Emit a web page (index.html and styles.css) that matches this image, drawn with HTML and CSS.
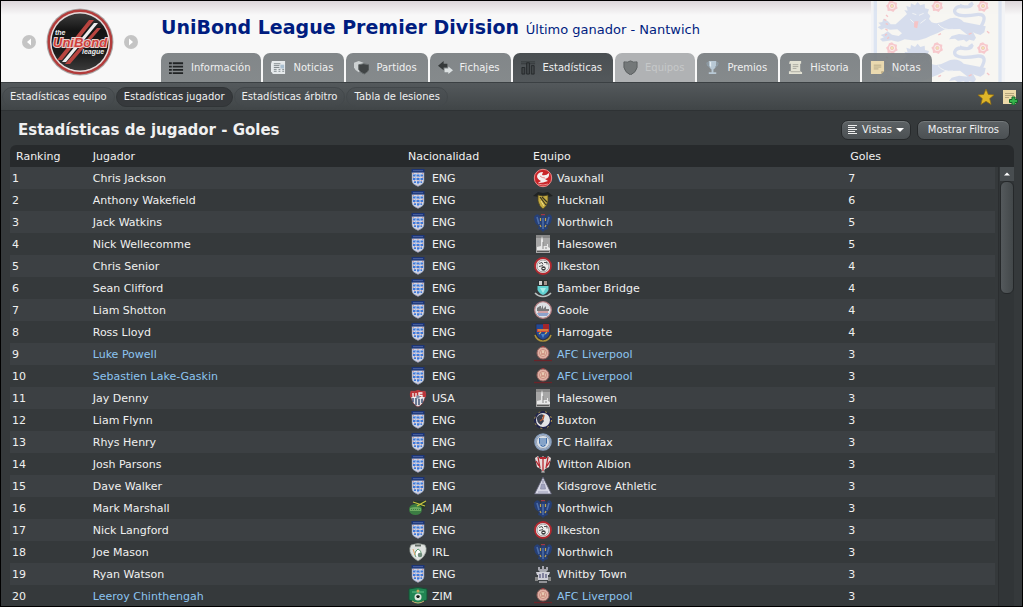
FILE: index.html
```
<!DOCTYPE html>
<html lang="es">
<head>
    <meta charset="UTF-8">
    <meta name="viewport" content="width=device-width, initial-scale=1.0">
    <title>UniBond League Premier Division</title>
    <link rel="stylesheet" href="styles.css">
</head>
<body>
    <svg class="symbols" aria-hidden="true">
        <!-- nations -->
        <symbol id="eng" viewBox="0 0 20 20">
            <path d="M4 4h12v9q0 3-6 5.500q-6-2.500-6-5.500z" fill="#cdd6ea" stroke="#7b88a3" stroke-width=".6"/>
            <path d="M3.500 1h13v3.500h-13z" fill="#1c3475"/>
            <path d="M5 2.700h10" stroke="#5a74b0" stroke-width=".8"/>
            <path d="M5 7.500h2.500m1 0h3m1 0H15M5 11h2.500m1 0h3m1 0H15M6 14.200h2m1 0h2.500m1 0H14" stroke="#3f78d6" stroke-width="1.800"/>
            <path d="M7 6.500h1M11 8.500h1M7 10h1M11 12h1M9 15.500h2" stroke="#7fa6e6"/>
            <path d="M5 5.500h1m3.500 0h1m3.500 0h1M5 9.300h1m3.500 0h1m3.500 0h1M6 12.700h1m2.500 0h1m2.500 0h1M9.500 17h1" stroke="#e09a92" stroke-width="1"/>
        </symbol>
        <symbol id="usa" viewBox="0 0 20 20">
            <path d="M3 3q3 1 7-1 4 2 7 1 2 3 0 7-2 7-7 9-5-2-7-9-2-4 0-7z" fill="#e3e0e4" stroke="#722e36" stroke-width=".8"/>
            <path d="M3 3q3 1 7-1 4 2 7 1 1.500 3 1 6H2q-.5-3 1-6z" fill="#bd3439"/>
            <path d="M5 10v4M8 10v7M11 10v7M14 10v5" stroke="#34496f" stroke-width="1.400"/>
            <path d="M5 5v3q0 2 3 1V5M14.500 5H11v2.500h3V10h-4" stroke="#f7f7f7" stroke-width="1.300" fill="none"/>
            <circle cx="10" cy="9" r="1.800" fill="#8390a9"/>
        </symbol>
        <symbol id="jam" viewBox="0 0 20 20">
            <path d="M6 3l12 0-1 7-4 2-8-5z" fill="#26382a"/>
            <ellipse cx="7.500" cy="11.500" rx="6.500" ry="5.500" fill="#3c7d43"/>
            <path d="M5 4l12 4M18 3L9 8" stroke="#c8c541" stroke-width="1.300"/>
            <path d="M2 10q6-2 11 0v3H2z" fill="#6dab62"/>
            <path d="M3 11.500h9" stroke="#3c7d43" stroke-dasharray="1 1"/>
        </symbol>
        <symbol id="irl" viewBox="0 0 20 20">
            <path d="M3 3q7-3 14 0 2 3 1 7-2 6-8 9-6-3-8-9-1-4 1-7z" fill="#dfe2df" stroke="#8b938c" stroke-width=".7"/>
            <path d="M7 2.500h6v2H7z" fill="#626d66"/>
            <path d="M8 15q-3-4 2-8 4 2 3 7" fill="#fff" stroke="#5c9970"/>
            <circle cx="12" cy="13" r="2.300" fill="#6f8b7a"/><path d="M5 7l2 6" stroke="#e3a46a"/>
        </symbol>
        <symbol id="zim" viewBox="0 0 20 20">
            <path d="M1 3q9-3 18 0v11q-5 1-9 4-4-3-9-4z" fill="#218553" stroke="#174f34"/>
            <path d="M4 5h12v2H4z" fill="#41a36d"/>
            <circle cx="10" cy="5" r="1.500" fill="#c7a45b"/>
            <circle cx="10" cy="11" r="3.500" fill="#dce8dd"/><path d="M10 9l2 1-1 2H9l-1-2z" fill="#162019"/>
            <path d="M4 15q6 4 12 0" stroke="#c9b274" fill="none"/>
        </symbol>

        <!-- clubs -->
        <symbol id="vauxhall" viewBox="0 0 20 20">
            <circle cx="10" cy="10" r="8.700" fill="#c92529" stroke="#e98b8b" stroke-width="1"/>
            <path d="M4 8q1-4 6-4l-1 3q4 1 7-2 1 5-4 6l3 2q-5 2-9 2H5l3-2q-4-2-4-5z" fill="#f5eeee"/>
            <path d="M7 8q2 2 5 2M5 16q5 2 10 0" stroke="#e98b8b" fill="none"/>
        </symbol>
        <symbol id="hucknall" viewBox="0 0 20 20">
            <path d="M0 6l5-4 5 1 5-1 5 4-5 1H6z" fill="#202323"/>
            <path d="M5 5q5 2 10 0v6q-1 5-5 8-4-3-5-8z" fill="#c4ab42" stroke="#4b431f" stroke-width=".8"/>
            <path d="M7 7l6 8M9 7l5 5" stroke="#373423" stroke-width="1.200"/><path d="M8 11l3 5" stroke="#eedd83"/>
        </symbol>
        <symbol id="northwich" viewBox="0 0 20 20">
            <path d="M1 5q3-5 6-1l1 2 1-4h3l1 4 1-2q3-4 5 1 0 7-5 9l1 3-3 1-2 2-2-2-3-1 1-3q-5-2-5-9z" fill="#263f76"/>
            <path d="M4 5l2 7M16 5l-2 7M10 6v11" stroke="#4b6da9" stroke-width="1.600"/>
            <path d="M8 2h4v1.200H8z" fill="#9f3840"/>
            <path d="M7.500 6v3M12.500 6v3M7 13l1 2M13 13l-1 2" stroke="#c5a64c" stroke-width="1.200"/>
        </symbol>
        <symbol id="halesowen" viewBox="0 0 20 20">
            <path d="M3 1h14v18H3z" fill="#a6a6a6"/><path d="M3 1h14v3H3z" fill="#878787"/>
            <path d="M4 15v-2l4-1V6l1-4 1 4v6h4v-2h1v3l2 1v2H4z" fill="#e8e8e8"/>
            <path d="M10 8v7M13 13v2" stroke="#888"/><path d="M4 17h12v1H4z" fill="#585858"/>
        </symbol>
        <symbol id="ilkeston" viewBox="0 0 20 20">
            <circle cx="10" cy="10" r="8" fill="#f1eeee" stroke="#b3272e" stroke-width="1.800"/>
            <circle cx="10" cy="10" r="6" fill="#eee" stroke="#777" stroke-width=".7"/>
            <path d="M6 7.500l3-1 1 2M11 6.500h3v2M6 10.500l4-1" stroke="#555" fill="none"/>
            <circle cx="10.500" cy="12.500" r="2.200" fill="#3e3e3e"/><path d="M9.500 12h2v1h-2z" fill="#fff"/>
        </symbol>
        <symbol id="bamber" viewBox="0 0 20 20">
            <path d="M5 2h10v6H5z" fill="#2c3030"/><path d="M6 3h3v4H6z" fill="#cfcfcf"/><path d="M11 3h3v4h-3z" fill="#a5938c"/>
            <path d="M4.500 8h11v4q-2 4-5.500 5-3.500-1-5.500-5z" fill="#61d0d0"/><path d="M7 10h6l-3 5z" fill="#a5ebe5"/>
            <path d="M2 15q4 4 8 3.500 4 .5 8-3.500" stroke="#bbc0bf" stroke-width="1.500" fill="none"/>
        </symbol>
        <symbol id="goole" viewBox="0 0 20 20">
            <circle cx="10" cy="10" r="8.300" fill="#dce0e4" stroke="#b77f83" stroke-width="1.200"/>
            <path d="M4 11V8l3-2h1v3l2-4v4l3-3v3h3v2z" fill="#77787a"/>
            <path d="M4 13h12l-2 3H6z" fill="#8ba2cc"/><path d="M5 12h10" stroke="#c46468"/>
        </symbol>
        <symbol id="harrogate" viewBox="0 0 20 20">
            <path d="M2 13q2 6 8 6t8-6" fill="none" stroke="#ad9138" stroke-width="1.600"/>
            <path d="M3 2h14v9q-1 5-7 7-6-2-7-7z" fill="#244894" stroke="#282a38" stroke-width=".7"/>
            <path d="M10 2h6v6h-6z" fill="#a4262b"/><path d="M4 7h12v3H4z" fill="#cf4737"/>
            <path d="M5 8h10M6 12l2-2M12 12l2-2" stroke="#dcb448" stroke-width="1.200"/><path d="M8 12h4l-2 4z" fill="#4c84c5"/>
        </symbol>
        <symbol id="liverpool" viewBox="0 0 20 20">
            <circle cx="10" cy="9" r="6" fill="#dfb0a4" stroke="#9a6560"/>
            <circle cx="10" cy="9" r="3.500" fill="#e8c9b1" stroke="#c27f74" stroke-width=".8"/>
            <path d="M8 8h1m2 0h1M8 10h4" stroke="#bb6c62"/><path d="M1 16.500h18" stroke="#6b2328" stroke-width="1.300"/>
            <path d="M8 3l2-1 2 1z" fill="#ad3037"/>
        </symbol>
        <symbol id="buxton" viewBox="0 0 20 20">
            <circle cx="10" cy="10" r="8" fill="#e3e3e5" stroke="#20234a" stroke-width="2"/>
            <circle cx="10" cy="10" r="8.500" fill="none" stroke="#b59a49" stroke-dasharray="2 5"/>
            <path d="M4 7q3-4 7-2L9 8l2 3-3 4q-5-3-4-8z" fill="#3a3f4f"/>
            <path d="M11 5l-1 4-3 2" stroke="#b35b38" stroke-width="1.500" fill="none"/>
        </symbol>
        <symbol id="halifax" viewBox="0 0 20 20">
            <circle cx="10" cy="10" r="8" fill="#dbe1e8" stroke="#899fbe" stroke-width="1.600"/>
            <circle cx="10" cy="10" r="6.500" fill="none" stroke="#7b89a0" stroke-width=".8"/>
            <path d="M6 6h8v5q-1 3-4 4-3-1-4-4z" fill="#3f6eaa"/><path d="M8 6v7M10 6v8M12 6v7" stroke="#f2f5f8" stroke-width=".8"/>
        </symbol>
        <symbol id="witton" viewBox="0 0 20 20">
            <path d="M2 4l3-2 2 3 3-3 3 3 2-3 3 2-2 9-4 2-2 4-2-4-4-2z" fill="#e7dada"/>
            <path d="M5 3l2 11M10 4v13M15 3l-2 11M3 7l3 5M17 7l-3 5" stroke="#b52831" stroke-width="1.300"/>
            <path d="M7 3h6v2H7z" fill="#b52831"/><path d="M8 18h4" stroke="#aaa"/>
        </symbol>
        <symbol id="kidsgrove" viewBox="0 0 20 20">
            <path d="M10 1l8.500 17h-17z" fill="#d8d8e6" stroke="#54556b" stroke-width=".8"/>
            <path d="M8.500 8h3l1 5h-5zM5 16h10" fill="#a0a2bf" stroke="#8e90ab" stroke-width=".8"/><path d="M10 4v3" stroke="#8183a0"/>
        </symbol>
        <symbol id="whitby" viewBox="0 0 20 20">
            <path d="M5 6V3h2v2h2V2h2v3h2V3h2v3l-2 2H7z" fill="#a7a8b0"/>
            <path d="M3 8h14l-1 3h-1v5H5v-5H4z" fill="#cfcfd8"/>
            <path d="M7 10v4M10 9v5M13 10v4" stroke="#5b5a80" stroke-width="1.300"/><path d="M2 13h3v4H2zm13 0h3v4h-3z" fill="#888"/>
            <path d="M6 18h8" stroke="#b0b0b4" stroke-width="1.500"/>
        </symbol>

        <!-- England badge in the header -->
        <symbol id="lion" viewBox="0 0 384 125">
            <path class="lion" d="M112 42l-8-12 10 2-4-14 12 4 2-12 12 6 8-10 8 10 13-4 1 13 12 3-4 11 8 9-4 9 8 10q19 8 42-6 32-17 54 5l66 13-4 18-12 8-16-5-6-4 9 17-6 9-14-3-9 7-7-7-18 3-9-6-18 2 8-10 22-6 26 3-23-18-45 1q-20 12-44 20-30 16-55 13l-22-3-20 8-20-5-26 4-8-8 12-5-10-7 11-4 10-7 13 10 20 4 10-8-14-12-22 1-15-5-11 5-11-7 10-6-8-8 12-2 3-10 14 8 8 9 15 0z"/>
            <path class="tail" d="M334 80q22-38-8-37-28 5-46 4-27-2-25-16 4-13 22-12 26 5 29-6M280 22l-10-7M298 17l12-8"/>
            <path class="mane" d="M128 40l12 4M148 46l14-6M132 68l-10-10M152 70l16-12M205 72q16 20 45 16"/>
            <path class="claw" d="M136 66h8l-3 16-6-2zM55 50l-6-5M50 61l-7-3M55 73l-7-2M54 91l-7-4M52 102l-6 4M58 111l-5 5M214 101l-8 4M306 99l-9 4M352 94l7 6"/>
        </symbol>
        <symbol id="rose" viewBox="0 0 40 40">
            <path d="M20 3l6 5 9 2-1 9 3 8-8 4-5 7-8-4-9 1-1-9-4-7 6-5 3-8z" fill="#f7c5c9"/>
            <circle cx="20" cy="20" r="9" fill="#fbeeea"/><circle cx="20" cy="20" r="5" fill="#eee5a9" stroke="#f2b4ba" stroke-width="2"/>
        </symbol>
    </svg>

    <header class="header">
        <svg class="badge" viewBox="4 3 402 243" preserveAspectRatio="none" aria-hidden="true">
            <path d="M4 3h402v243H4z" fill="#f3f4f6"/>
            <path d="M12 3h384v243H12z" fill="#dbe4f2"/>
            <path d="M22 3h364v243H22z" fill="#f7f6f2"/>
            <use href="#lion" x="0" y="0" width="384" height="125"/>
            <use href="#lion" x="0" y="125" width="384" height="125"/>
            <use href="#rose" x="47" y="-2" width="40" height="40"/>
            <use href="#rose" x="183" y="-2" width="40" height="40"/>
            <use href="#rose" x="320" y="-2" width="40" height="40"/>
            <use href="#rose" x="47" y="124" width="40" height="40"/>
            <use href="#rose" x="183" y="124" width="40" height="40"/>
            <use href="#rose" x="320" y="124" width="40" height="40"/>
        </svg>
        <div class="league">
            <button class="arrow" aria-label="Anterior"><svg viewBox="0 0 14 14"><path d="M9 3.500v7L5 7z" fill="#fff"/></svg></button>
            <svg class="logo" viewBox="0 0 68 68" role="img" aria-label="the UniBond league">
                <defs>
                    <linearGradient id="disc" x2="0" y2="1"><stop stop-color="#3c3c3c"/><stop offset=".3" stop-color="#141414"/><stop offset=".7" stop-color="#1c1c1c"/><stop offset="1" stop-color="#3a3a3a"/></linearGradient>
                </defs>
                <circle cx="34" cy="34" r="33.500" fill="#aaa"/>
                <circle cx="34" cy="34" r="32.500" fill="#b23c3b"/>
                <circle cx="34" cy="34" r="30" fill="#e5dcdc"/>
                <circle cx="34" cy="34" r="28.500" fill="url(#disc)"/>
                <path d="M43 12h5L16 52h-5zM51 20h4L24 56h-5z" fill="#b9443f"/>
                <path d="M48 15h4L20 54h-4z" fill="#eee"/>
                <text class="logo-small" x="9" y="27">the</text>
                <text class="logo-name" x="7" y="39">UniBond</text>
                <text class="logo-small" x="36" y="46">league</text>
            </svg>
            <button class="arrow" aria-label="Siguiente"><svg viewBox="0 0 14 14"><path d="M5 3.500v7L9 7z" fill="#fff"/></svg></button>
        </div>
        <div class="heading">
            <h1>UniBond League Premier Division <small>Último ganador - Nantwich</small></h1>
            <nav class="tabs">
                <a href="#"><svg viewBox="0 0 16 16"><path d="M0 3.500h3m1 0h11M0 7h3m1 0h11M0 10.500h3m1 0h11M0 14h3m1 0h11" stroke="#202324" stroke-width="2"/></svg>Información</a>
                <a href="#"><svg viewBox="0 0 16 16"><path d="M1 1h14v14H2L0 12V4z" fill="#e6eaec"/><path d="M3 4h7M3 6h6M3 8h6M3 10h3m2 0h2m2 0h2M3 12h3m2 0h2m2 0h2" stroke="#7c8489"/><path d="M10 5h4v4h-4z" fill="#a9bfd0"/></svg>Noticias</a>
                <a href="#"><svg viewBox="0 0 16 16"><path d="M0 3l5-2 5 2v5q-1 3-5 5-4-2-5-5z" fill="#cdd1d2"/><path d="M5 5l5-1 6 1v5q-1 3-5 5-5-2-6-5z" fill="#404445" stroke="#686d6e"/></svg>Partidos</a>
                <a href="#"><svg viewBox="0 0 16 16"><path d="M0 6l6-5v3h4v4H6v3z" fill="#35393a"/><path d="M16 11l-5-4v2H7v4h4v2z" fill="#dce1e2"/></svg>Fichajes</a>
                <a href="#" class="active"><svg viewBox="0 0 16 16"><path d="M0 2h15M0 4h15" stroke="#34393b"/><path d="M1 8h3v7H1zm5-5h3v12H6zm5 3h3v9h-3z" fill="#414648" stroke="#25292b"/></svg>Estadísticas</a>
                <a aria-disabled="true"><svg viewBox="0 0 16 16"><path d="M1 2q4 1 7-1 3 2 7 1v6q-1 5-7 8-6-3-7-8z" fill="#747879" stroke="#595d5e"/></svg>Equipos</a>
                <a href="#"><svg viewBox="0 0 16 16"><path d="M4 1h8v5q-1 3-3 4v3h3v2H4v-2h3v-3Q5 9 4 6z" fill="#b8c8d4"/><path d="M4 3H2q0 4 3 4M12 3h2q0 4-3 4" fill="none" stroke="#91a3af"/><path d="M6 2v5" stroke="#eef5f8"/></svg>Premios</a>
                <a href="#"><svg viewBox="0 0 16 16"><path d="M2 1h12v3h-1v8l2 1v2H1v-3h2V4H1z" fill="#e3e2d4"/><path d="M5 5h6M5 7h6M5 9h4M3 12.500h10" stroke="#a9a99f"/></svg>Historia</a>
                <a href="#"><svg viewBox="0 0 16 16"><path d="M1 1h14v11l-3 3H1z" fill="#ead9af"/><path d="M15 12h-3v3z" fill="#b8a780"/><path d="M4 5.500h8M4 7.500h8M4 9.500h5" stroke="#b5a988"/></svg>Notas</a>
            </nav>
        </div>
    </header>

    <nav class="subnav">
        <a href="#">Estadísticas equipo</a>
        <a href="#" class="active">Estadísticas jugador</a>
        <a href="#">Estadísticas árbitro</a>
        <a href="#">Tabla de lesiones</a>
        <div class="tools">
            <button aria-label="Favorito"><svg viewBox="0 0 16 16"><path d="M8 0l2.300 5.400 5.700.5-4.300 3.700 1.400 5.900L8 12.300l-5.100 3.200 1.400-5.900L0 5.900l5.700-.5z" fill="#dfb629" stroke="#8f6d14" stroke-width=".7"/></svg></button>
            <button aria-label="Añadir nota"><svg viewBox="0 0 16 16"><path d="M1 1h13v14H1z" fill="#ecd9a8"/><path d="M3 4.500h9M3 6.500h9M3 8.500h4" stroke="#b5a57d"/><path d="M10 8h3v2.500h2.500v3H13V16h-3v-2.500H7.500v-3H10z" fill="#37b44c" stroke="#14622a"/></svg></button>
        </div>
    </nav>

    <main class="content">
        <div class="title-row">
            <h2>Estadísticas de jugador - Goles</h2>
            <button class="menu"><svg viewBox="0 0 10 10"><path d="M0 .5h9M0 2.500h7M0 4.500h9M0 6.500h7M0 8.500h9" stroke="#eee"/></svg>Vistas<svg class="caret" viewBox="0 0 8 6"><path d="M0 1h8L4 5z" fill="#fff"/></svg></button>
            <button>Mostrar Filtros</button>
        </div>
        <div class="list">
            <table>
                <thead>
                    <tr>
                        <th class="rank">Ranking</th>
                        <th class="player">Jugador</th>
                        <th class="nation">Nacionalidad</th>
                        <th class="club">Equipo</th>
                        <th class="goals">Goles</th>
                    </tr>
                </thead>
                <tbody id="rows"></tbody>
            </table>
            <div class="scrollbar">
                <button aria-label="Subir"><svg viewBox="0 0 8 6"><path d="M1 4.500h6L4 1.500z" fill="#fff"/></svg></button>
                <div class="thumb"></div>
            </div>
        </div>
    </main>

    <script>
        // name, nation, club, badge, goals
        const players = [
            ["Chris Jackson", "ENG", "Vauxhall", "vauxhall", 7],
            ["Anthony Wakefield", "ENG", "Hucknall", "hucknall", 6],
            ["Jack Watkins", "ENG", "Northwich", "northwich", 5],
            ["Nick Wellecomme", "ENG", "Halesowen", "halesowen", 5],
            ["Chris Senior", "ENG", "Ilkeston", "ilkeston", 4],
            ["Sean Clifford", "ENG", "Bamber Bridge", "bamber", 4],
            ["Liam Shotton", "ENG", "Goole", "goole", 4],
            ["Ross Lloyd", "ENG", "Harrogate", "harrogate", 4],
            ["Luke Powell", "ENG", "AFC Liverpool", "liverpool", 3],
            ["Sebastien Lake-Gaskin", "ENG", "AFC Liverpool", "liverpool", 3],
            ["Jay Denny", "USA", "Halesowen", "halesowen", 3],
            ["Liam Flynn", "ENG", "Buxton", "buxton", 3],
            ["Rhys Henry", "ENG", "FC Halifax", "halifax", 3],
            ["Josh Parsons", "ENG", "Witton Albion", "witton", 3],
            ["Dave Walker", "ENG", "Kidsgrove Athletic", "kidsgrove", 3],
            ["Mark Marshall", "JAM", "Northwich", "northwich", 3],
            ["Nick Langford", "ENG", "Ilkeston", "ilkeston", 3],
            ["Joe Mason", "IRL", "Northwich", "northwich", 3],
            ["Ryan Watson", "ENG", "Whitby Town", "whitby", 3],
            ["Leeroy Chinthengah", "ZIM", "AFC Liverpool", "liverpool", 3]
        ];
        const myClub = "AFC Liverpool";
        let rowsHTML = "";
        players.forEach(([name, nation, club, badge, goals], i) => {
            rowsHTML += `<tr class="${club === myClub ? "mine" : ""}">
                <td>${i + 1}</td>
                <td><a href="#">${name}</a></td>
                <td><svg class="crest"><use href="#${nation.toLowerCase()}"/></svg>${nation}</td>
                <td><svg class="crest"><use href="#${badge}"/></svg><a href="#">${club}</a></td>
                <td>${goals}</td>
            </tr>`;
        });
        document.getElementById("rows").innerHTML = rowsHTML;
    </script>
</body>
</html>
```

FILE: styles.css
```
* {
    box-sizing: border-box;
}
body {
    margin: 0;
    height: 100vh;
    display: flex;
    flex-direction: column;
    overflow: hidden;
    border: 1px solid #000;
    background: #35393b;
    color: #f0f0f0;
    font-family: "DejaVu Sans", sans-serif;
    font-size: 11px;
}
a {
    color: inherit;
    text-decoration: none;
}
button {
    padding: 0;
    border: none;
    background: none;
    color: inherit;
    font: inherit;
    cursor: pointer;
}
svg {
    display: block;
    flex: none;
}
.symbols {
    position: absolute;
    width: 0;
    height: 0;
}

/* header */
.header {
    position: relative;
    display: flex;
    flex: none;
    height: 81px;
    background: linear-gradient(#dcd6da, #f8f8f8 14px);
}
.badge {
    position: absolute;
    top: 0;
    right: 17px;
    width: 134px;
    height: 81px;
    opacity: 0.9;
}
.lion {
    fill: #d3dbec;
}
.tail {
    fill: none;
    stroke: #d3dbec;
    stroke-width: 10;
}
.mane {
    fill: none;
    stroke: #f1f3f5;
    stroke-width: 3;
}
.claw {
    fill: #f5bfc1;
    stroke: #f5bfc1;
    stroke-width: 4;
}
.league {
    display: flex;
    align-items: center;
    gap: 10px;
    width: 160px;
    padding-left: 21px;
}
.arrow {
    width: 14px;
    height: 14px;
    border-radius: 50%;
    background: #c4c4c4;
}
.logo {
    width: 68px;
    height: 68px;
}
.logo-small {
    font: italic bold 7px "Liberation Sans", sans-serif;
    fill: #eee;
}
.logo-name {
    font: italic bold 13px "Liberation Sans", sans-serif;
    fill: #cf3f3b;
    stroke: #eccfcd;
    stroke-width: 2px;
    paint-order: stroke;
}
.heading {
    position: relative;
    display: flex;
    flex-direction: column;
    justify-content: space-between;
}
h1 {
    margin: 14px 0 0;
    color: #001d80;
    font-size: 19px;
    line-height: 24px;
    white-space: nowrap;
}
h1 small {
    font-size: 13px;
    font-weight: normal;
}
.tabs {
    display: flex;
    gap: 2px;
}
.tabs a {
    display: flex;
    align-items: center;
    gap: 7px;
    height: 29px;
    padding: 0 11px 0 8px;
    border-radius: 7px 7px 0 0;
    background: linear-gradient(rgba(117, 122, 125, 0.9), rgba(126, 131, 133, 0.94));
    font-size: 10px;
}
.tabs svg {
    width: 15px;
    height: 15px;
}
.tabs .active {
    background: linear-gradient(#4a4f52, #53585b);
}
.tabs a[aria-disabled] {
    background: #b0b2b4;
    color: #c6c8c9;
}

/* second level */
.subnav {
    display: flex;
    flex: none;
    align-items: center;
    gap: 1px;
    height: 29px;
    padding: 0 4px 0 1px;
    border-top: 1px solid #3b4043;
    border-bottom: 1px solid #2e3234;
    background: linear-gradient(#54595c, #404547);
    font-size: 10px;
}
.subnav a {
    padding: 0 7px;
    border: 1px solid #43484b;
    border-radius: 10px;
    background: linear-gradient(#4d5255, #44494b);
    line-height: 18px;
}
.subnav .active {
    border-color: #303436;
    background: #36393c;
}
.tools {
    display: flex;
    gap: 8px;
    margin-left: auto;
}
.tools svg {
    width: 16px;
    height: 16px;
}

/* list */
.content {
    flex: 1;
    display: flex;
    flex-direction: column;
    min-height: 0;
    padding: 0 8px 0 9px;
}
.title-row {
    display: flex;
    flex: none;
    align-items: center;
    gap: 6px;
    height: 34px;
    padding: 3px 4px 0 8px;
}
h2 {
    flex: 1;
    margin: 0;
    font-size: 15px;
}
.title-row button {
    display: flex;
    align-items: center;
    gap: 4px;
    height: 20px;
    padding: 0 10px;
    border: 1px solid #26292b;
    border-radius: 7px;
    background: linear-gradient(#5d6265, #4b5053);
    box-shadow: inset 0 1px #74797b;
    font-size: 10px;
}
.title-row .menu {
    padding: 0 6px;
}
.title-row button svg {
    width: 10px;
    height: 10px;
}
.title-row button .caret {
    width: 8px;
    height: 6px;
}
.list {
    flex: 1;
    display: flex;
    align-items: flex-start;
    min-height: 0;
    overflow: hidden;
    border-radius: 6px 6px 0 0;
    background: linear-gradient(#272a2c 22px, #35393b 22px);
}
table {
    flex: 1;
    table-layout: fixed;
    border-collapse: collapse;
}
th,
td {
    height: 22px;
    padding: 0 2px 0 0;
    text-align: left;
    font-weight: normal;
    white-space: nowrap;
}
th:first-child {
    padding-left: 6px;
}
td:first-child {
    padding-left: 2px;
}
th:last-child {
    padding-left: 2px;
}
.rank {
    width: 8.400%;
}
.player,
.club {
    width: 32%;
}
.nation {
    width: 12.700%;
}
tbody tr:nth-child(odd) {
    background: #3c4043;
}
.mine a {
    color: #8cc4f0;
}
.crest {
    display: inline-block;
    width: 20px;
    height: 20px;
    margin-right: 4px;
    vertical-align: -6px;
}
.scrollbar {
    align-self: stretch;
    width: 16px;
    margin: 22px 0 0 3px;
    padding-left: 1px;
    border-left: 1px solid #2b2e30;
    background: #313537;
}
.scrollbar button {
    display: flex;
    align-items: center;
    justify-content: center;
    width: 100%;
    height: 14px;
    background: #484d50;
}
.scrollbar button svg {
    width: 8px;
    height: 6px;
}
.thumb {
    height: 113px;
    border: 1px solid #25282a;
    border-radius: 6px;
    background: linear-gradient(90deg, #54595c, #43484a);
}
```
